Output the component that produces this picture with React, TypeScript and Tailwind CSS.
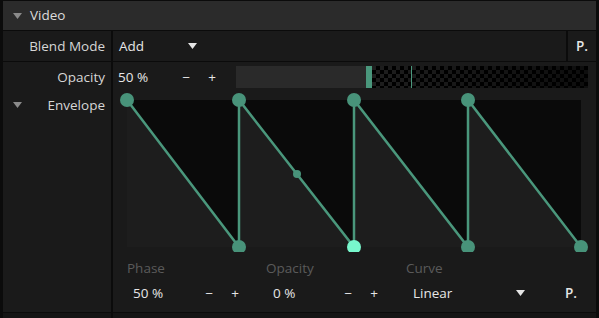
import React from "react";

const GREEN = "#4a977c";

function Caret({ className = "" }: { className?: string }) {
  return (
    <svg width="9" height="6" viewBox="0 0 9 6" className={className}>
      <path d="M0 0 H9 L4.5 6 Z" fill="currentColor" />
    </svg>
  );
}

function Label({ children }: { children: React.ReactNode }) {
  return (
    <div className="w-[108px] flex items-center justify-end pr-[6px] text-[#d6d6d6]">
      {children}
    </div>
  );
}

function Divider() {
  return <div className="w-[2px] self-stretch bg-[#0b0b0b]" />;
}

function Stepper({ value, gap }: { value: string; gap: string }) {
  return (
    <div className="flex items-center">
      <span className={`pl-[6px] ${gap}`}>{value}</span>
    </div>
  );
}

function Envelope() {
  const top = 8;
  const bot = 155;
  const xs = [14, 126, 241, 355, 468];
  const pts: [number, number][] = [
    [xs[0], top],
    [xs[1], bot],
    [xs[1], top],
    [xs[2], bot],
    [xs[2], top],
    [xs[3], bot],
    [xs[3], top],
    [xs[4], bot],
  ];
  const line = pts.map((p) => p.join(",")).join(" ");
  const fill = line + ` ${xs[0]},${bot}`;
  return (
    <svg width="483" height="160" className="block">
      <rect x={xs[0]} y={top} width={xs[4] - xs[0]} height={bot - top} fill="#0a0a0a" />
      <polygon points={fill} fill="#1d1d1d" />
      <polyline points={line} fill="none" stroke={GREEN} strokeWidth="2.5" />
      {pts.map(([x, y], i) =>
        x === xs[2] && y === bot ? null : (
          <circle key={i} cx={x} cy={y} r="7" fill="#48937a" />
        )
      )}
      <circle cx={xs[2]} cy={bot} r="7" fill="#78f7cc" />
      <circle cx={184} cy={82} r="4" fill="#48937a" />
    </svg>
  );
}

function OpacitySlider() {
  return (
    <div className="flex-1 mr-[8px] h-[22px] flex">
      <div className="w-[130px] bg-[#2a2a2a]" />
      <div className="w-[6px] bg-[#4a977c]" />
      <div className="relative flex-1">
        <svg width="100%" height="22" className="block">
          <defs>
            <pattern id="chk" width="8" height="8" patternUnits="userSpaceOnUse">
              <rect width="8" height="8" fill="#000" />
              <rect width="4" height="4" fill="#1e1e1e" />
              <rect x="4" y="4" width="4" height="4" fill="#1e1e1e" />
            </pattern>
            <linearGradient id="fade" x1="0" x2="1" y1="0" y2="0">
              <stop offset="0" stopColor="#000" stopOpacity="0" />
              <stop offset="1" stopColor="#000" stopOpacity="0.55" />
            </linearGradient>
          </defs>
          <rect width="100%" height="22" fill="url(#chk)" />
          <rect width="100%" height="22" fill="url(#fade)" />
        </svg>
        <div className="absolute left-[39px] top-0 h-full w-px bg-[#4a977c]" />
      </div>
    </div>
  );
}

export default function App() {
  return (
    <div
      className="w-[599px] h-[318px] bg-[#0b0b0b] overflow-hidden text-[13.5px] text-[#e6e6e6]"
      style={{ fontFamily: "'Open Sans', 'Noto Sans', sans-serif" }}
    >
      <div className="mt-px mx-[3px] flex flex-col">
        {/* header */}
        <div className="h-[29px] bg-[#2b2b2b] flex items-center pl-[10px] gap-[8px] text-[#dcdcdc]">
          <Caret className="text-[#8a8a8a]" />
          <span>Video</span>
        </div>
        <div className="h-px" />

        {/* blend mode */}
        <div className="h-[30px] flex bg-[#1a1a1a]">
          <Label>Blend Mode</Label>
          <Divider />
          <div className="flex-1 flex items-center">
            <span className="pl-[6px] w-[75px]">Add</span>
            <Caret className="text-[#e6e6e6]" />
            <div className="flex-1" />
            <Divider />
            <div className="w-[28px] text-center font-semibold">P.</div>
          </div>
        </div>
        <div className="h-px" />

        {/* opacity */}
        <div className="h-[30px] flex bg-[#1a1a1a]">
          <Label>Opacity</Label>
          <Divider />
          <div className="flex-1 flex items-center">
            <span className="pl-[5px] w-[63px]">50 %</span>
            <span className="w-[20px] text-center">−</span>
            <span className="ml-[6px] w-[20px] text-center">+</span>
            <div className="ml-[14px] flex-1 flex">
              <OpacitySlider />
            </div>
          </div>
        </div>

        {/* envelope */}
        <div className="h-[220px] flex bg-[#1a1a1a]">
          <div className="w-[108px] h-[26px] flex items-center pl-[10px] pr-[6px] text-[#d6d6d6]">
            <Caret className="text-[#8a8a8a]" />
            <span className="ml-auto">Envelope</span>
          </div>
          <Divider />
          <div className="flex-1 flex flex-col">
            <Envelope />
            <div className="mt-[7px] h-[18px] flex items-center pl-[14px] text-[#5a5a5a]">
              <span className="w-[139px]">Phase</span>
              <span className="w-[140px]">Opacity</span>
              <span>Curve</span>
            </div>
            <div className="mt-[7px] h-[18px] flex items-center pl-[14px]">
              <div className="w-[139px] flex items-center">
                <span className="pl-[6px] w-[72px]">50 %</span>
                <span className="w-[20px] text-center">−</span>
                <span className="ml-[6px] w-[20px] text-center">+</span>
              </div>
              <div className="w-[140px] flex items-center">
                <span className="pl-[7px] w-[72px]">0 %</span>
                <span className="w-[20px] text-center">−</span>
                <span className="ml-[6px] w-[20px] text-center">+</span>
              </div>
              <div className="flex-1 flex items-center">
                <span className="pl-[7px] w-[110px]">Linear</span>
                <Caret className="text-[#e6e6e6]" />
                <span className="ml-[40px] font-semibold">P.</span>
              </div>
            </div>
          </div>
        </div>
        <div className="h-px" />

        {/* next row */}
        <div className="h-[10px] flex bg-[#141414]">
          <div className="w-[108px]" />
          <Divider />
        </div>
      </div>
    </div>
  );
}
